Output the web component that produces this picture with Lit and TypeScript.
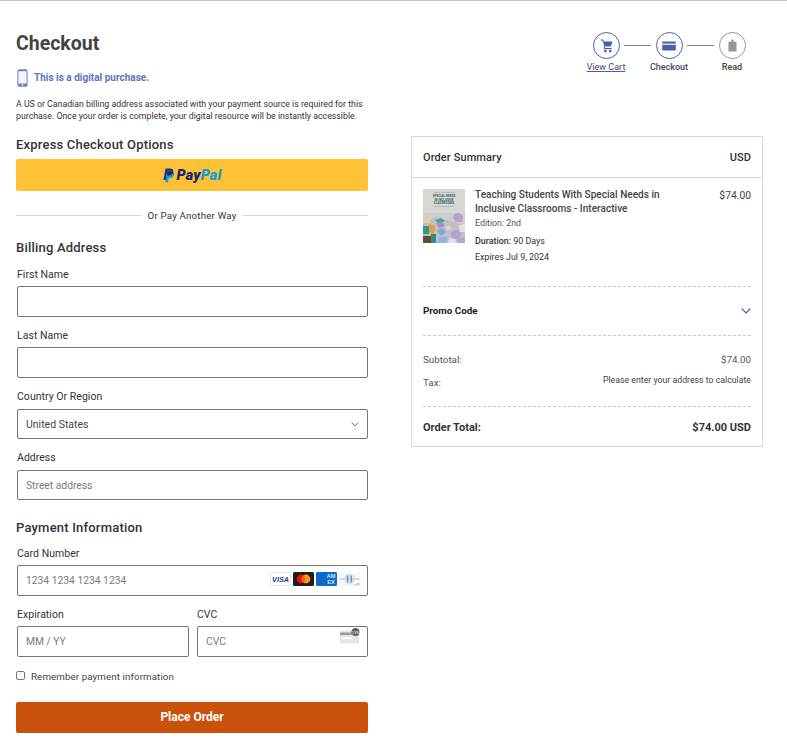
import { LitElement, html, css, svg } from "lit";
import { customElement } from "lit/decorators.js";

const cart = svg`<svg width="13" height="14" viewBox="0 0 13 14"><path d="M.6 1h2.2l.5 1.9" fill="none" stroke="#4a5fa8" stroke-width="1.1"/><path d="M3 2.6h9.4L11 7.6H4.2z" fill="#4a5fa8"/><path d="M4.2 7.6 4.6 9.6h7" fill="none" stroke="#4a5fa8" stroke-width="1.1"/><rect x="4.2" y="11" width="2.4" height="2.2" rx=".5" fill="#4a5fa8"/><rect x="9" y="11" width="2.4" height="2.2" rx=".5" fill="#4a5fa8"/></svg>`;
const card = svg`<svg width="14" height="10" viewBox="0 0 14 10"><rect x=".2" y=".4" width="13.6" height="9" rx="1" fill="#4a5fa8"/><rect x=".2" y="2.6" width="13.6" height="1.2" fill="#fff"/></svg>`;
const tag = svg`<svg width="9" height="13" viewBox="0 0 9 13"><path d="M.5 3 3.4 2.4V.4h2.2v2L8.5 3v9.5H.5z" fill="#969696"/></svg>`;
const phone = svg`<svg width="11" height="18" viewBox="0 0 11 18"><rect x="0.4" y="0.3" width="10.2" height="17.4" rx="1.8" fill="#6c80c6"/><rect x="1.4" y="2.2" width="8.2" height="12.4" fill="#f4f5fb"/><circle cx="5.5" cy="16.1" r="0.8" fill="#fff"/></svg>`;
const chevron = (c: string, w: number, sw = 1) => svg`<svg width="${w}" height="${w * 0.6}" viewBox="0 0 10 6"><path d="M.7.7 5 5l4.3-4.3" fill="none" stroke="${c}" stroke-width="${sw}"/></svg>`;
const paypalMark = svg`<svg width="13" height="15" viewBox="0 0 12 14"><path d="M3.2.4h4.3c2.1 0 3.3 1.1 3 3-.4 2.4-2 3.5-4.2 3.5H4.9l-.7 4.2H1.3z" fill="#1b3281"/><path d="M4.5 3.2h4c1.9 0 3 .9 2.8 2.7-.3 2.2-1.8 3.4-3.9 3.4H6.2l-.6 4.1H3z" fill="#179bd7"/><path d="M4.4 3.5h4.6c.6 0 1 .1 1.5.3-.3 2-1.8 3.1-3.9 3.1H4.9z" fill="#15235c"/></svg>`;

const visa = html`<svg class="cd" width="21" height="14" viewBox="0 0 21 14"><rect x=".5" y=".5" width="20" height="13" rx="1" fill="#fff" stroke="#e4e4e4"/><text x="10.5" y="9.8" text-anchor="middle" font-family="Liberation Sans" font-weight="700" font-style="italic" font-size="7.2" fill="#1a3a94">VISA</text></svg>`;
const mc = svg`<svg class="cd" width="21" height="14" viewBox="0 0 21 14"><rect width="21" height="14" rx="1.5" fill="#1d1d1d"/><circle cx="8" cy="7" r="4.4" fill="#e3101d"/><circle cx="13" cy="7" r="4.4" fill="#f59a18"/><path d="M10.5 3.4a4.4 4.4 0 0 1 0 7.2 4.4 4.4 0 0 1 0-7.2z" fill="#f5610f"/></svg>`;
const amex = html`<svg class="cd" width="21" height="14" viewBox="0 0 21 14"><rect width="21" height="14" rx="1" fill="#0d6cc9"/><text x="15" y="6.2" text-anchor="middle" font-family="Liberation Sans" font-weight="700" font-size="5.6" fill="#cfe6fb">AM</text><text x="15" y="12" text-anchor="middle" font-family="Liberation Sans" font-weight="700" font-size="5.6" fill="#cfe6fb">EX</text></svg>`;
const diners = svg`<svg class="cd" width="21" height="14" viewBox="0 0 21 14"><defs><filter id="b1"><feGaussianBlur stdDeviation=".4"/></filter></defs><rect width="21" height="14" fill="#f6f8fa"/><g filter="url(#b1)"><circle cx="10.5" cy="7" r="5.5" fill="#d4e6f4"/><path d="M.5 7h20" stroke="#c9dded" stroke-width="2"/><path d="M8.6 3.4v7.2M12.2 3.4v7.2" stroke="#6f8dab" stroke-width="1.4"/><path d="M13 13.4 20.5 10v3.4z" fill="#f5c7a0"/></g></svg>`;
const cvc = html`<svg width="20" height="16" viewBox="0 0 20 16"><rect y="2.5" width="19" height="13" rx="1" fill="#e6e6e6"/><rect y="4.5" width="19" height="2.5" fill="#9b9b9b"/><rect x="2" y="9.5" width="10" height="1.6" fill="#fff"/><circle cx="15.5" cy="4" r="4" fill="#5c5c66"/><text x="15.5" y="5.6" text-anchor="middle" font-family="Liberation Sans" font-size="4.4" fill="#fff">135</text></svg>`;

const cover = html`<svg class="cover" width="42" height="54" viewBox="0 0 42 54">
  <defs><filter id="soft" x="-5%" y="-5%" width="110%" height="110%"><feGaussianBlur stdDeviation=".35"/></filter></defs>
  <rect width="42" height="54" fill="#cfcdcb"/>
  <rect width="42" height="24" fill="#d8d8d3"/>
  <text x="21" y="3.5" text-anchor="middle" font-family="Roboto" font-size="2" fill="#888">Teaching Students With</text>
  <text x="21" y="8" text-anchor="middle" font-family="Roboto" font-weight="700" font-size="3.1" fill="#2f5f68">SPECIAL NEEDS</text>
  <text x="21" y="11.5" text-anchor="middle" font-family="Roboto" font-weight="700" font-size="3.1" fill="#2f5f68">IN INCLUSIVE</text>
  <text x="21" y="15" text-anchor="middle" font-family="Roboto" font-weight="700" font-size="3.1" fill="#2f5f68">CLASSROOMS</text>
  <rect x="11" y="17" width="20" height=".8" fill="#a9b6b6"/>
  <g filter="url(#soft)">
    <path d="M0 54V34L14 28l28 8v18z" fill="#c2bfc0"/>
    <rect x="1" y="29" width="6" height="5" fill="#e2cf9a"/>
    <path d="M0 37h6v8H0z" fill="#2c9a8c"/>
    <path d="M6 35l6 2-1 8-5-2z" fill="#e0a035"/>
    <path d="M12 31l6-2 4 3-6 3z" fill="#3fa898"/>
    <path d="M13 34l6-1 3 4-6 2z" fill="#a98ccc"/>
    <path d="M14 42l5-3 4 4-5 4z" fill="#7fa9dc"/>
    <path d="M0 47h8v7H0z" fill="#6a4a2a"/>
    <path d="M8 45h5v9H8z" fill="#2f8f86"/>
    <path d="M15 49l7-2 3 3-3 4h-7z" fill="#8fb4e2"/>
    <path d="M22 38l4-2 3 3-4 3z" fill="#d9d4e4"/>
    <path d="M31 25l5-1 4 3-1 6-6 0-3-4z" fill="#b69ed6"/>
    <path d="M27 44l6-3 5 3-1 5-6 1z" fill="#b69ed6"/>
    <path d="M36 36l6-1v8h-5z" fill="#e4e2e5"/>
    <path d="M26 49l6 1 2 4h-9z" fill="#e0dce8"/>
    <path d="M34 50l8-2v6h-7z" fill="#b9a2d6"/>
  </g>
</svg>`;

@customElement("app-root")
export class AppRoot extends LitElement {
  static styles = css`
    :host { display: block; font-family: Roboto, "Liberation Sans", sans-serif; color: #333; background: #fff; }
    * { box-sizing: border-box; }
    .page { border-top: 1px solid #c8c8c8; display: flex; gap: 43px; padding: 0 24px 18px 16px; align-items: flex-start; height: 751px; overflow: hidden; }
    .left { width: 352px; flex: none; }
    .right { width: 352px; flex: none; }
    h1 { font-size: 19.5px; line-height: 24px; font-weight: 700; color: #444; margin: 31px 0 0; }
    .digital { display: flex; align-items: center; gap: 7px; margin-top: 12px; height: 19px; font-size: 10px; font-weight: 700; color: #5f74bb; }
    .digital svg { display: block; margin-left: 1px; }
    .digital span { margin-left: -1px; }
    .note { font-size: 8.77px; line-height: 12px; color: #333; margin: 11px 0 0; white-space: nowrap; }
    h2 { font-size: 13px; line-height: 16px; font-weight: 500; color: #333; margin: 0; letter-spacing: .2px; }
    .express { margin-top: 15px; }
    .paypal { height: 32px; margin-top: 6px; border-radius: 2px; background: #ffc136; display: flex; align-items: center; justify-content: center; gap: 2px; padding-right: 1px; }
    .pp { font: italic 900 14.5px Roboto, sans-serif; letter-spacing: .1px; color: #15296e; }
    .pp b { color: #179bd7; font-weight: 900; }
    .or { display: flex; align-items: center; gap: 6px; margin-top: 17px; height: 14px; font-size: 9.7px; letter-spacing: .2px; color: #333; }
    .or::before, .or::after { content: ""; flex: 1; height: 1px; background: #d8d8d8; }
    .billing { margin-top: 18px; }
    label { display: block; font-size: 10.5px; line-height: 13px; color: #333; margin-left: 1px; letter-spacing: .03px; }
    .field { margin-top: 12px; }
    .field.name .input { margin-top: 5px; }
    .field.tall .input { height: 30px; }
    .input { height: 31px; margin: 6px 0 0 1px; border: 1px solid #757575; border-radius: 2px; display: flex; align-items: center; padding: 0 8px; font-size: 10.3px; color: #7a7a7a; background: #fff; }
    .field.card { margin-top: 11px; }
    .field.card .input, .split .input { margin-top: 5px; }
    .input.select { color: #444; font-size: 10.5px; justify-content: space-between; padding-right: 8px; }
    .cards { margin-left: auto; display: flex; gap: 0; margin-top: -4px; margin-right: -1px; }
    .cd { display: block; margin-right: 2px; }
    .cd:last-child { margin-right: 0; }
    .cvc { margin-left: auto; margin-top: -8px; margin-right: -1px; display: block; }
    .payment { margin-top: 20px; }
    .split { display: grid; grid-template-columns: 173px 172px; gap: 7px; margin-top: 12px; }
    .split .field { margin: 0; }
    .remember { display: flex; align-items: center; gap: 6px; margin-top: 13px; height: 13px; font-size: 9.75px; letter-spacing: .1px; color: #444; }
    .box { width: 9px; height: 9px; border: 1px solid #767676; border-radius: 2px; background: #fff; margin-bottom: 2px; }
    .place { height: 31px; margin-top: 19px; padding-bottom: 2px; background: #c9510c; border-radius: 2px; color: #fff; font-weight: 700; font-size: 12px; display: flex; align-items: center; justify-content: center; }

    .stepper { display: flex; justify-content: flex-end; margin: 31px 6px 0 0; height: 62px; width: 346px; }
    .step { width: 50px; display: flex; flex-direction: column; align-items: center; font-size: 9px; line-height: 11px; color: #3f4a5e; }
    .circle { width: 27px; height: 27px; border-radius: 50%; border: 1px solid #4a5fa8; display: flex; align-items: center; justify-content: center; margin-bottom: 3px; background: #fff; }
    .circle.off { border-color: #999; }
    .circle svg { display: block; }
    .step a { color: #3f4a5e; text-decoration: underline; text-decoration-color: #4a5fa8; }
    .step b { font-weight: 500; }
    .line { width: 27px; height: 1px; background: #8a8a8a; margin: 13px -7px 0 -7px; flex: none; position: relative; }
    .step.read { color: #444; }

    .summary { margin-top: 42px; border: 1px solid #d8d8d8; padding: 0 11px; height: 311px; }
    .row { display: flex; justify-content: space-between; }
    .head { margin: 0 -11px; padding: 0 11px; height: 41px; align-items: center; border-bottom: 1px solid #d8d8d8; font-size: 11px; font-weight: 500; color: #333; letter-spacing: .1px; }
    .item { display: flex; margin-top: 11px; height: 97px; }
    .cover { display: block; flex: none; }
    .info { margin-left: 10px; flex: 1; }
    .title { font-size: 10.05px; line-height: 14px; color: #444; margin-top: -1px; font-weight: 500; width: 200px; letter-spacing: .02px; }
    .ed { font-size: 8.8px; line-height: 14px; color: #555; }
    .du { font-size: 8.9px; line-height: 16px; color: #333; }
    .du.first { margin-top: 3px; }
    .du em { font-style: normal; font-weight: 500; }
    .price { font-size: 10.3px; color: #444; }
    .dash { border-top: 1px dashed #c9c9c9; }
    .promo { height: 49px; align-items: center; font-size: 9.8px; font-weight: 700; color: #222; padding-bottom: 1px; }
    .sub { font-size: 9.8px; color: #555; }
    .totals { padding-top: 17px; height: 71px; }
    .sub.first { margin-top: 1px; }
    .totals .row + .row { margin-top: 10px; }
    .tax { align-items: flex-start; }
    .tax span:first-child { margin-top: 2px; }
    .tax span:last-child { font-size: 8.75px; color: #444; }
    .total { height: 40px; align-items: center; font-size: 11px; font-weight: 700; color: #333; padding-top: 2px; }
  `;

  render() {
    return html`<div class="page">
      <div class="left">
        <h1>Checkout</h1>
        <div class="digital">${phone}<span>This is a digital purchase.</span></div>
        <p class="note">A US or Canadian billing address associated with your payment source is required for this<br />purchase. Once your order is complete, your digital resource will be instantly accessible.</p>
        <h2 class="express">Express Checkout Options</h2>
        <div class="paypal">${paypalMark}<span class="pp">Pay<b>Pal</b></span></div>
        <div class="or">Or Pay Another Way</div>
        <h2 class="billing">Billing Address</h2>
        <div class="field name"><label>First Name</label><div class="input"></div></div>
        <div class="field name"><label>Last Name</label><div class="input"></div></div>
        <div class="field tall"><label>Country Or Region</label><div class="input select"><span>United States</span>${chevron("#555", 8)}</div></div>
        <div class="field tall"><label>Address</label><div class="input">Street address</div></div>
        <h2 class="payment">Payment Information</h2>
        <div class="field card"><label>Card Number</label><div class="input"><span>1234 1234 1234 1234</span><div class="cards">${visa}${mc}${amex}${diners}</div></div></div>
        <div class="split">
          <div class="field"><label>Expiration</label><div class="input">MM / YY</div></div>
          <div class="field"><label>CVC</label><div class="input">CVC<span class="cvc">${cvc}</span></div></div>
        </div>
        <div class="remember"><span class="box"></span><span>Remember payment information</span></div>
        <div class="place">Place Order</div>
      </div>
      <div class="right">
        <div class="stepper">
          <div class="step"><div class="circle">${cart}</div><a>View Cart</a></div>
          <div class="line"></div>
          <div class="step"><div class="circle">${card}</div><b>Checkout</b></div>
          <div class="line"></div>
          <div class="step read"><div class="circle off">${tag}</div><b>Read</b></div>
        </div>
        <div class="summary">
          <div class="row head"><span>Order Summary</span><span>USD</span></div>
          <div class="item">
            ${cover}
            <div class="info">
              <div class="title">Teaching Students With Special Needs in Inclusive Classrooms - Interactive</div>
              <div class="ed">Edition: 2nd</div>
              <div class="du first"><em>Duration:</em> 90 Days</div>
              <div class="du">Expires Jul 9, 2024</div>
            </div>
            <div class="price">$74.00</div>
          </div>
          <div class="row promo dash"><span>Promo Code</span>${chevron("#3f55a8", 10, 1.2)}</div>
          <div class="totals dash">
            <div class="row sub first"><span>Subtotal:</span><span>$74.00</span></div>
            <div class="row sub tax"><span>Tax:</span><span>Please enter your address to calculate</span></div>
          </div>
          <div class="row total dash"><span>Order Total:</span><span>$74.00 USD</span></div>
        </div>
      </div>
    </div>`;
  }
}
